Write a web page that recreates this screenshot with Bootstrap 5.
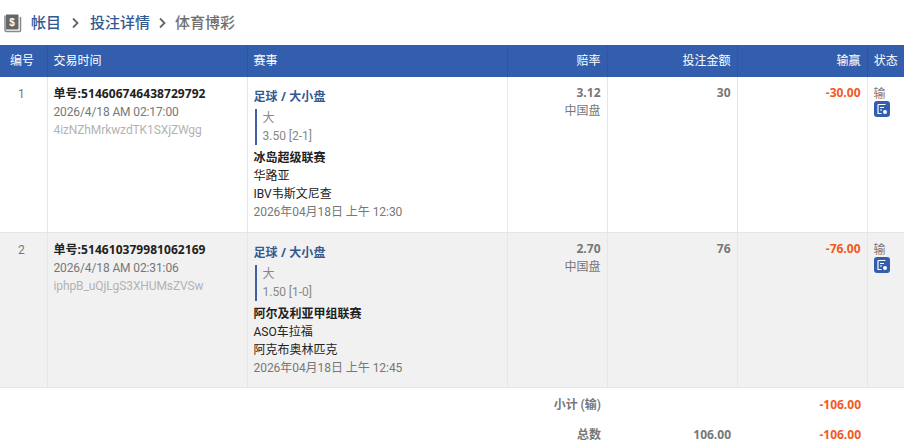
<!DOCTYPE html>
<html lang="zh">
<head>
    <meta charset="UTF-8">
    <meta name="viewport" content="width=device-width, initial-scale=1.0">
    <title>体育博彩</title>
    <link href="https://cdn.jsdelivr.net/npm/bootstrap@5.3.2/dist/css/bootstrap.min.css" rel="stylesheet">
    <style>
        html, body {
            overflow: hidden;
        }

        body {
            font-family: Roboto, "Noto Sans CJK SC", sans-serif;
            font-size: 12px;
            line-height: 18px;
            color: #666;
        }

        .crumb-bar {
            height: 45px;
            padding-left: 4px;
            font-size: 15px;
            font-weight: 500;
        }

        .crumb-bar a {
            color: #34598f;
            text-decoration: none;
        }

        .crumb-bar .crumb-now {
            color: #6f6f6f;
        }

        .crumb-bar .crumb-sep-a {
            width: 29px;
        }

        .crumb-bar .crumb-sep-b {
            width: 25px;
        }

        .crumb-bar .crumb-icon {
            margin-right: 9px;
        }

        .bet-table {
            table-layout: fixed;
            width: 904px;
            margin: 0;
            border-collapse: collapse;
        }

        .bet-table th {
            height: 32px;
            padding: 0 6px;
            background: #335eae;
            color: #fff;
            font-weight: 400;
            font-size: 12px;
            border: 0;
            border-left: 1px solid #2f569f;
            vertical-align: middle;
        }

        .bet-table th:first-child {
            border-left: 0;
            padding: 0 0 0 10px;
            text-align: left;
        }

        .bet-table td {
            padding: 7px 6px 6px;
            border: 0;
            border-left: 1px solid #e6e6e6;
            border-bottom: 1px solid #e6e6e6;
            vertical-align: top;
            background: transparent;
            color: #777;
        }

        .bet-table td:first-child {
            border-left: 0;
            padding: 8px 8px 6px 4px;
        }

        .bet-table tr.row-even td {
            background: #f1f1f1;
        }

        .bet-table tr.row-data td {
            height: 155px;
        }

        .bet-table tfoot td {
            border: 0;
            height: 30px;
            padding: 6px;
            font-weight: 600;
        }

        .bet-table tfoot tr:first-child td {
            height: 32px;
            padding-top: 8px;
        }

        .bet-table td .order-no {
            color: #222;
            font-family: "Open Sans", "Noto Sans CJK SC", sans-serif;
            font-weight: 700;
            letter-spacing: 0.05px;
            line-height: 19px;
        }

        .order-time {
            letter-spacing: -0.12px;
        }

        .order-ref {
            color: #b3b3b3;
            letter-spacing: -0.1px;
        }

        .sport-name {
            color: #34598f;
            font-family: "Open Sans", "Noto Sans CJK SC", sans-serif;
            font-weight: 700;
            letter-spacing: 0.1px;
            margin-top: 4px;
        }

        .pick-box {
            border-left: 2px solid #3f5f9f;
            padding-left: 6px;
            margin: 3px 0 4px 1px;
            color: #888;
        }

        .league-name {
            color: #222;
            font-weight: 700;
        }

        .team-name {
            color: #222;
        }

        .start-time {
            letter-spacing: -0.05px;
        }

        .bet-table td.num-bold {
            font-family: "Open Sans", sans-serif;
            font-weight: 700;
        }

        .odds-num {
            font-family: "Open Sans", sans-serif;
            font-weight: 700;
        }

        .bet-table td.loss-num {
            color: #f2591f;
            font-family: "Open Sans", sans-serif;
            font-weight: 700;
        }

        .status-word {
            margin-top: 1px;
        }

        .status-btn {
            width: 16px;
            height: 16px;
            margin-top: -2px;
            display: block;
            background: #335eae;
            border-radius: 3px;
        }
    </style>
</head>
<body>

    <div class="crumb-bar d-flex align-items-center">
        <svg class="crumb-icon" width="18" height="20" viewBox="0 0 18 20">
            <path d="M2 1.5h11.5a1 1 0 0 1 1 1v13a1 1 0 0 1-1 1H2z" fill="#666"/>
            <path d="M1 2.500v14.500a1.500 1.500 0 0 0 1.500 1.500h13a1 1 0 0 0 1-1V4" fill="none" stroke="#888" stroke-width="1.500"/>
            <text x="8" y="12.500" font-size="10" font-weight="700" fill="#fff" text-anchor="middle" font-family="Liberation Sans">$</text>
        </svg>
        <a href="#">帐目</a>
        <span class="crumb-sep-a d-flex justify-content-center">
            <svg width="9" height="12" viewBox="0 0 9 12"><path d="M2 1.500 6.500 6 2 10.500" fill="none" stroke="#666" stroke-width="1.800"/></svg>
        </span>
        <a href="#">投注详情</a>
        <span class="crumb-sep-b d-flex justify-content-center">
            <svg width="9" height="12" viewBox="0 0 9 12"><path d="M2 1.500 6.500 6 2 10.500" fill="none" stroke="#666" stroke-width="1.800"/></svg>
        </span>
        <span class="crumb-now">体育博彩</span>
    </div>

    <table class="table bet-table">
        <colgroup>
            <col style="width:47px">
            <col style="width:200px">
            <col style="width:260px">
            <col style="width:100px">
            <col style="width:130px">
            <col style="width:130px">
            <col style="width:37px">
        </colgroup>
        <thead>
            <tr>
                <th>编号</th>
                <th>交易时间</th>
                <th>赛事</th>
                <th class="text-end">赔率</th>
                <th class="text-end">投注金额</th>
                <th class="text-end">输赢</th>
                <th class="text-center">状态</th>
            </tr>
        </thead>
        <tbody id="betRows"></tbody>
        <tfoot>
            <tr>
                <td colspan="3"></td>
                <td class="text-end">小计 (输)</td>
                <td></td>
                <td class="text-end loss-num">-106.00</td>
                <td></td>
            </tr>
            <tr>
                <td colspan="3"></td>
                <td class="text-end">总数</td>
                <td class="text-end num-bold">106.00</td>
                <td class="text-end loss-num">-106.00</td>
                <td></td>
            </tr>
        </tfoot>
    </table>

    <script src="https://cdn.jsdelivr.net/npm/bootstrap@5.3.2/dist/js/bootstrap.bundle.min.js"></script>

    <script>
        const bets = [
            { no: '514606746438729792', time: '2026/4/18 AM 02:17:00', ref: '4izNZhMrkwzdTK1SXjZWgg', line: '3.50 [2-1]', league: '冰岛超级联赛', home: '华路亚', away: 'IBV韦斯文尼查', start: '2026年04月18日 上午 12:30', odds: '3.12', stake: '30', win: '-30.00' },
            { no: '514610379981062169', time: '2026/4/18 AM 02:31:06', ref: 'iphpB_uQjLgS3XHUMsZVSw', line: '1.50 [1-0]', league: '阿尔及利亚甲组联赛', home: 'ASO车拉福', away: '阿克布奥林匹克', start: '2026年04月18日 上午 12:45', odds: '2.70', stake: '76', win: '-76.00' }
        ];

        const rows = document.getElementById('betRows');
        bets.forEach((bet, i) => {
            const tr = document.createElement('tr');
            tr.className = i % 2 ? 'row-data row-even' : 'row-data';
            tr.innerHTML = `
                <td class="text-center">${i + 1}</td>
                <td>
                    <div class="order-no">单号:${bet.no}</div>
                    <div class="order-time">${bet.time}</div>
                    <div class="order-ref">${bet.ref}</div>
                </td>
                <td>
                    <div class="sport-name">足球 / 大小盘</div>
                    <div class="pick-box"><div>大</div><div>${bet.line}</div></div>
                    <div class="league-name">${bet.league}</div>
                    <div class="team-name">${bet.home}</div>
                    <div class="team-name">${bet.away}</div>
                    <div class="start-time">${bet.start}</div>
                </td>
                <td class="text-end"><div class="odds-num">${bet.odds}</div><div>中国盘</div></td>
                <td class="text-end num-bold">${bet.stake}</td>
                <td class="text-end loss-num">${bet.win}</td>
                <td>
                    <div class="status-word">输</div>
                    <span class="status-btn">
                        <svg class="d-block" width="16" height="16" viewBox="0 0 16 16">
                            <path d="M4 3.500h7.500M4 3.500v9h3.500M6 6.500h4M6 9h2" fill="none" stroke="#fff" stroke-width="1.200"/>
                            <circle cx="11" cy="11" r="2" fill="#fff"/>
                        </svg>
                    </span>
                </td>`;
            rows.appendChild(tr);
        });
    </script>

</body>
</html>
